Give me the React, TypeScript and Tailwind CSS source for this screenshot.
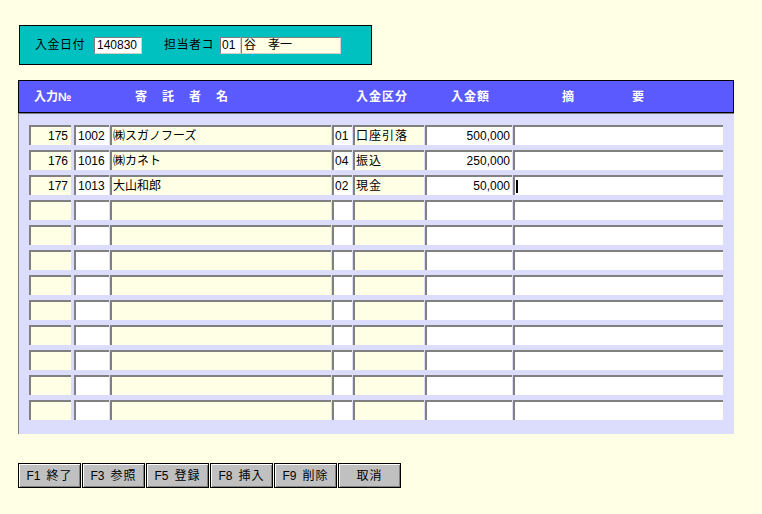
import React from "react";

interface Row {
  no: string;
  code: string;
  name: string;
  kbn: string;
  kbnName: string;
  amount: string;
  memo: string;
  cursor?: boolean;
}

const rows: Row[] = [
  { no: "175", code: "1002", name: "㈱スガノフーズ", kbn: "01", kbnName: "口座引落", amount: "500,000", memo: "" },
  { no: "176", code: "1016", name: "㈱カネト", kbn: "04", kbnName: "振込", amount: "250,000", memo: "" },
  { no: "177", code: "1013", name: "大山和郎", kbn: "02", kbnName: "現金", amount: "50,000", memo: "", cursor: true },
];

const empty: Row = { no: "", code: "", name: "", kbn: "", kbnName: "", amount: "", memo: "" };
const allRows: Row[] = [...rows, ...Array.from({ length: 9 }, () => empty)];

const cell = "h-[20px] border-t-2 border-l-2 border-[#808080] flex items-center text-[12px] leading-none text-black";
const field = "h-[17px] border border-[#808080] border-r-[#d4d0c8] border-b-[#d4d0c8] flex items-center leading-none";

const buttons: [string, string][] = [
  ["F1", "終了"],
  ["F3", "参照"],
  ["F5", "登録"],
  ["F8", "挿入"],
  ["F9", "削除"],
  ["", "取消"],
];

export default function App() {
  return (
    <div className="w-[762px] h-[514px] bg-[#ffffe6] pt-[25px] font-['Liberation_Sans','Noto_Sans_CJK_JP',sans-serif] text-[12px] text-black">
      {/* header form */}
      <div className="ml-[19px] w-[353px] h-[40px] border border-black bg-[#00c0c0] flex items-center">
        <span className="ml-[15px] w-[59px] tracking-[0.5px]">入金日付</span>
        <div className={`${field} w-[48px] bg-white pl-[2px]`}>140830</div>
        <span className="ml-[22px] w-[56px] tracking-[0.5px]">担当者コ</span>
        <div className={`${field} w-[21px] bg-white pl-[1px]`}>01</div>
        <div className={`${field} w-[100px] bg-[#ffffe6] pl-[2px]`}>谷　孝一</div>
      </div>

      {/* grid header */}
      <div className="mt-[15px] ml-[18px] w-[716px] h-[33px] border border-black bg-[#5a5aff] flex items-center text-white font-bold text-[12px] pl-[15px]">
        <span className="w-[101px]">入力№</span>
        <span className="w-[221px] tracking-[15px]">寄託者名</span>
        <span className="w-[95px] tracking-[1px]">入金区分</span>
        <span className="w-[111px] tracking-[1px]">入金額</span>
        <span className="w-[70px]">摘</span>
        <span>要</span>
      </div>

      {/* grid body */}
      <div className="ml-[18px] w-[716px] h-[321px] bg-[#dcdcfc] border-t border-l border-[#808080] pt-[11px] pl-[10px] flex flex-col gap-[5px]">
        {allRows.map((r, i) => (
          <div key={i} className="flex">
            <div className={`${cell} w-[42px] bg-[#ffffe6] justify-end pr-[3px]`}>{r.no}</div>
            <div className={`${cell} ml-[3px] w-[35px] bg-white pl-[2px]`}>{r.code}</div>
            <div className={`${cell} ml-[1px] w-[221px] bg-[#ffffe6] pl-[1px]`}>{r.name}</div>
            <div className={`${cell} ml-[1px] w-[20px] bg-white pl-[1px]`}>{r.kbn}</div>
            <div className={`${cell} ml-[1px] w-[71px] bg-[#ffffe6] pl-[1px] tracking-[1px]`}>{r.kbnName}</div>
            <div className={`${cell} ml-[1px] w-[87px] bg-white justify-end pr-[2px]`}>{r.amount}</div>
            <div className={`${cell} ml-[1px] w-[210px] bg-white pl-[1px]`}>
              {r.cursor && <span className="block w-[2px] h-[13px] bg-black" />}
              {r.memo}
            </div>
          </div>
        ))}
      </div>

      {/* function keys */}
      <div className="mt-[29px] ml-[18px] flex gap-[1px]">
        {buttons.map(([k, label]) => (
          <div
            key={label}
            className="w-[63px] h-[25px] bg-[#c0c0c0] border border-black shadow-[inset_1px_1px_0_#ffffff,inset_-1px_-1px_0_#808080] flex items-center justify-center gap-[6px] text-[12px] leading-none"
          >
            {k && <span>{k}</span>}
            <span className="tracking-[1px]">{label}</span>
          </div>
        ))}
      </div>
    </div>
  );
}
